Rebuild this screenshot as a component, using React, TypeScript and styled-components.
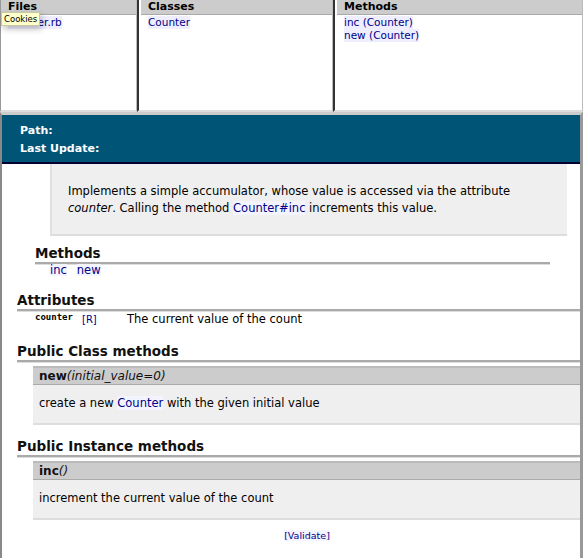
import styled, { createGlobalStyle } from "styled-components"

const Global = createGlobalStyle`
    html, body {
        margin: 0;
        padding: 0;
        background: #ffffff;
        font-family: "DejaVu Sans", Verdana, sans-serif;
        color: #000000;
    }
`

const Page = styled.div`
    width: 583px;
    height: 558px;
    overflow: hidden;
    display: flex;
    flex-direction: column;
`

const Frames = styled.div`
    display: flex;
    height: 112px;
    flex-shrink: 0;
`

const Pane = styled.div<{ $w: number }>`
    width: ${p => p.$w}px;
    flex-shrink: 0;
    box-sizing: border-box;
    border-left: 2px solid #333333;
    border-right: 1px solid #bbbbbb;
    border-bottom: 2px solid #dddddd;
    padding-left: 2px;
    position: relative;
    &:first-child {
        border-left: 1px solid #999999;
        padding-left: 0;
    }
`

const PaneTitle = styled.div`
    background: #cccccc;
    font-weight: bold;
    font-size: 11px;
    line-height: 14px;
    padding-left: 7px;
    border-bottom: 1px solid #aaaaaa;
`

const PaneList = styled.div`
    display: flex;
    flex-direction: column;
    align-items: flex-start;
    padding: 1px 0 0 7px;
`

const PaneLink = styled.a`
    color: #000088;
    font-size: 10.5px;
    line-height: 13px;
    background: #eeeeff;
    text-decoration: none;
`

const Tooltip = styled.div`
    position: absolute;
    left: 0;
    top: 12px;
    background: #ffffcc;
    border: 1px solid #c8c8a0;
    font-size: 8.5px;
    line-height: 12px;
    padding: 0 2px;
    box-shadow: 2px 3px 6px rgba(0, 0, 0, 0.25);
`

const Main = styled.div`
    flex: 1;
    border-left: 2px solid #888888;
    border-right: 3px solid #999999;
    border-top: 3px solid #cccccc;
`

const Banner = styled.div`
    background: #005577;
    color: #ffffff;
    border-bottom: 2px solid #000033;
    padding: 7px 0 4px 18px;
    font-size: 11px;
    font-weight: bold;
    line-height: 18px;
`

const Description = styled.div`
    margin: 0 13px 0 48px;
    background: #efefef;
    border-left: 2px solid #e0e0e0;
    border-bottom: 2px solid #dddddd;
    padding: 19px 16px 17px 16px;
    font-size: 11.5px;
    line-height: 17px;
`

const Link = styled.a`
    color: #000088;
    text-decoration: none;
    background: #f4f4ff;
`

const Heading = styled.h3<{ $indent: number; $right: number; $top: number }>`
    margin: ${p => p.$top}px ${p => p.$right}px 0 ${p => p.$indent}px;
    font-size: 13.5px;
    line-height: 17px;
    font-weight: bold;
    color: #111111;
    border-bottom: 2px solid #aaaaaa;
    box-shadow: 0 1px 0 #dddddd;
`

const MethodLinks = styled.div`
    display: flex;
    gap: 10px;
    padding: 0 0 2px 48px;
    font-size: 11.5px;
    line-height: 12px;
`

const AttrRow = styled.div`
    display: flex;
    align-items: baseline;
    padding: 1px 0 2px 33px;
    font-size: 11.5px;
    line-height: 14px;
`

const AttrName = styled.span`
    font-family: "DejaVu Sans Mono", monospace;
    font-weight: bold;
    font-size: 9px;
    width: 47px;
    position: relative;
    top: -3px;
`

const AttrRw = styled.span`
    color: #000088;
    font-size: 10px;
    width: 45px;
`

const MethodBox = styled.div`
    margin: 4px 0 0 31px;
    background: #efefef;
    border-bottom: 2px solid #dddddd;
`

const MethodHead = styled.div`
    background: #cccccc;
    border-top: 2px solid #bbbbbb;
    border-bottom: 1px solid #aaaaaa;
    padding: 0 6px;
    font-size: 12px;
    line-height: 16px;
    font-weight: bold;
    color: #111111;
    em {
        font-weight: normal;
    }
`

const MethodBody = styled.div`
    padding: 11px 6px 12px 6px;
    font-size: 11.5px;
    line-height: 15px;
`

const Footer = styled.div`
    text-align: center;
    padding-top: 10px;
    font-size: 9.5px;
    line-height: 12px;
    padding-left: 32px;
`

export default function App() {
    return (
        <Page>
            <Global />
            <Frames>
                <Pane $w={137}>
                    <PaneTitle>Files</PaneTitle>
                    <PaneList>
                        <PaneLink>counter.rb</PaneLink>
                    </PaneList>
                    <Tooltip>Cookies</Tooltip>
                </Pane>
                <Pane $w={196}>
                    <PaneTitle>Classes</PaneTitle>
                    <PaneList>
                        <PaneLink>Counter</PaneLink>
                    </PaneList>
                </Pane>
                <Pane $w={250}>
                    <PaneTitle>Methods</PaneTitle>
                    <PaneList>
                        <PaneLink>inc (Counter)</PaneLink>
                        <PaneLink>new (Counter)</PaneLink>
                    </PaneList>
                </Pane>
            </Frames>
            <Main>
                <Banner>
                    <div>Path:</div>
                    <div>Last Update:</div>
                </Banner>
                <Description>
                    Implements a simple accumulator, whose value is accessed via the attribute{" "}
                    <em>counter</em>. Calling the method <Link>Counter#inc</Link> increments this value.
                </Description>
                <Heading $indent={33} $right={30} $top={9}>Methods</Heading>
                <MethodLinks>
                    <Link>inc</Link>
                    <Link>new</Link>
                </MethodLinks>
                <Heading $indent={15} $right={0} $top={14}>Attributes</Heading>
                <AttrRow>
                    <AttrName>counter</AttrName>
                    <AttrRw>[R]</AttrRw>
                    <span>The current value of the count</span>
                </AttrRow>
                <Heading $indent={15} $right={0} $top={14}>Public Class methods</Heading>
                <MethodBox>
                    <MethodHead>new<em>(initial_value=0)</em></MethodHead>
                    <MethodBody>
                        create a new <Link>Counter</Link> with the given initial value
                    </MethodBody>
                </MethodBox>
                <Heading $indent={15} $right={0} $top={13}>Public Instance methods</Heading>
                <MethodBox>
                    <MethodHead>inc<em>()</em></MethodHead>
                    <MethodBody>increment the current value of the count</MethodBody>
                </MethodBox>
                <Footer>
                    <Link>[Validate]</Link>
                </Footer>
            </Main>
        </Page>
    )
}
